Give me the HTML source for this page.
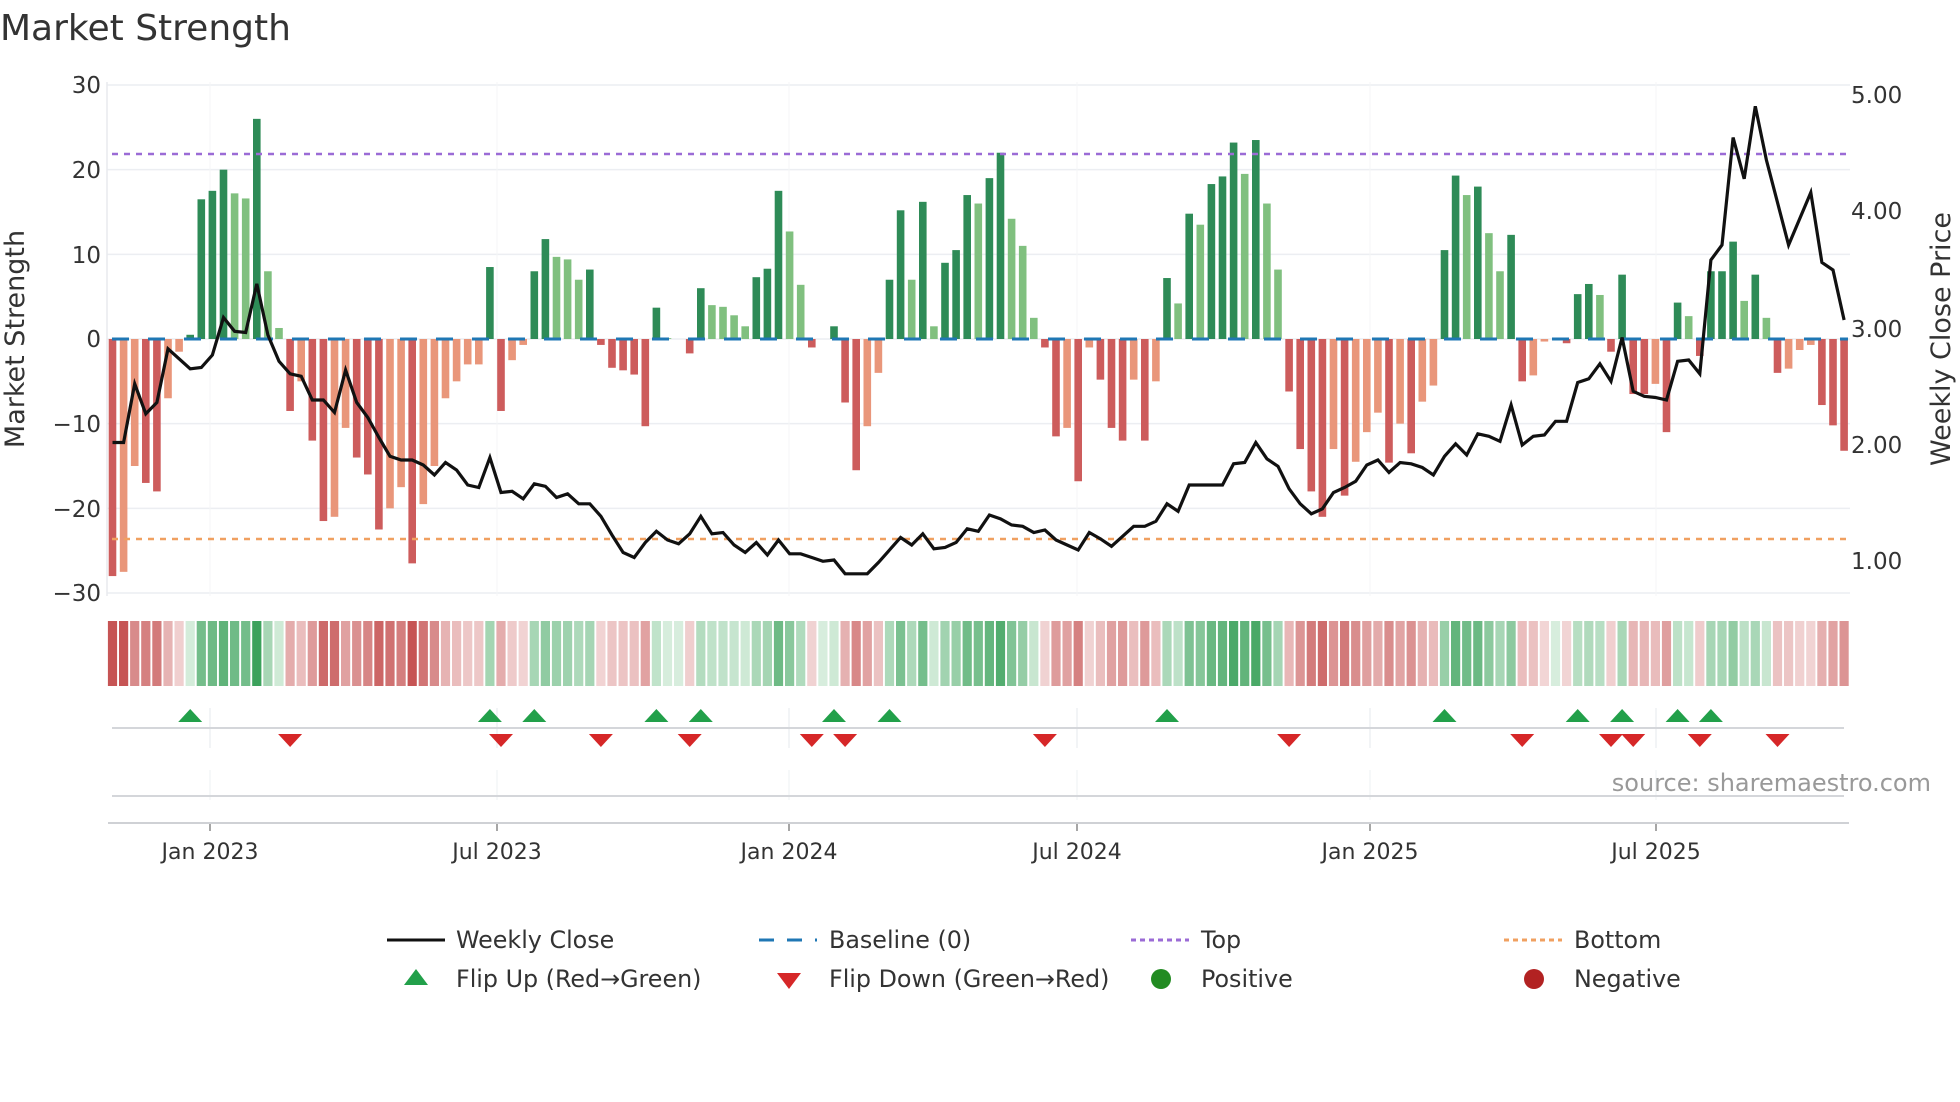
<!DOCTYPE html>
<html><head><meta charset="utf-8"><style>
html,body{margin:0;padding:0;background:#fff;}
svg{display:block;font-family:"DejaVu Sans","Liberation Sans",sans-serif;}
</style></head><body>
<svg id="c" width="1960" height="1102" viewBox="0 0 1960 1102" xmlns="http://www.w3.org/2000/svg">
<text x="0" y="40" font-size="36" fill="#333">Market Strength</text>
<g id="grid"></g>
<g font-size="23" fill="#333" text-anchor="end">
<text x="101" y="93">30</text><text x="101" y="178">20</text><text x="101" y="263">10</text>
<text x="101" y="347">0</text><text x="101" y="432">−10</text><text x="101" y="517">−20</text><text x="101" y="601">−30</text>
</g>
<g font-size="23" fill="#333">
<text x="1851" y="103">5.00</text><text x="1851" y="219">4.00</text><text x="1851" y="337">3.00</text>
<text x="1851" y="453">2.00</text><text x="1851" y="569">1.00</text>
</g>
<text transform="translate(24,339) rotate(-90)" font-size="27" fill="#333" text-anchor="middle">Market Strength</text>
<text transform="translate(1950,339) rotate(-90)" font-size="27" fill="#333" text-anchor="middle">Weekly Close Price</text>
<g id="bars"></g>
<g id="strip"></g>
<g id="marks"></g>
<g font-size="22" fill="#333" text-anchor="middle">
<text x="210" y="859">Jan 2023</text><text x="497" y="859">Jul 2023</text><text x="789" y="859">Jan 2024</text>
<text x="1077" y="859">Jul 2024</text><text x="1370" y="859">Jan 2025</text><text x="1656" y="859">Jul 2025</text>
</g>
<text x="1931" y="791" font-size="24" fill="#999" text-anchor="end">source: sharemaestro.com</text>
<g font-size="23.8" fill="#333">
<line x1="387" y1="940" x2="445" y2="940" stroke="#111" stroke-width="3"/>
<text x="456" y="948">Weekly Close</text>
<line x1="759" y1="940" x2="817" y2="940" stroke="#1f77b4" stroke-width="3" stroke-dasharray="15,13"/>
<text x="829" y="948">Baseline (0)</text>
<line x1="1131" y1="940" x2="1189" y2="940" stroke="#9b6bd6" stroke-width="3" stroke-dasharray="5,4"/>
<text x="1201" y="948">Top</text>
<line x1="1504" y1="940" x2="1562" y2="940" stroke="#f0a060" stroke-width="3" stroke-dasharray="5,4"/>
<text x="1574" y="948">Bottom</text>
<polygon points="404,985 428,985 416,969" fill="#22a04a"/>
<text x="456" y="987">Flip Up (Red→Green)</text>
<polygon points="777,973 801,973 789,989" fill="#d62728"/>
<text x="829" y="987">Flip Down (Green→Red)</text>
<circle cx="1161" cy="979" r="10" fill="#228b22"/>
<text x="1201" y="987">Positive</text>
<circle cx="1534" cy="979" r="10" fill="#b22222"/>
<text x="1574" y="987">Negative</text>
</g>
</svg>
<script>
var D=[[-28,'DR'],[-27.5,'LR'],[-15,'LR'],[-17,'DR'],[-18,'DR'],[-7,'LR'],[-1.5,'LR'],[0.5,'DG'],[16.5,'DG'],[17.5,'DG'],[20,'DG'],[17.2,'LG'],[16.6,'LG'],[26,'DG'],[8,'LG'],[1.3,'LG'],
[-8.5,'DR'],[-5,'LR'],[-12,'DR'],[-21.5,'DR'],[-21,'LR'],[-10.5,'LR'],[-14,'DR'],[-16,'DR'],[-22.5,'DR'],[-20,'LR'],[-17.5,'LR'],[-26.5,'DR'],[-19.5,'LR'],[-15,'LR'],[-7,'LR'],[-5,'LR'],[-3,'LR'],[-3,'LR'],
[8.5,'DG'],[-8.5,'DR'],[-2.5,'LR'],[-0.7,'LR'],[8,'DG'],[11.8,'DG'],[9.7,'LG'],[9.4,'LG'],[7,'LG'],[8.2,'DG'],[-0.7,'DR'],[-3.4,'DR'],[-3.7,'DR'],[-4.2,'DR'],[-10.3,'DR'],[3.7,'DG'],[0.1,'LG'],[0,'LR'],[-1.7,'DR'],
[6,'DG'],[4,'LG'],[3.8,'LG'],[2.8,'LG'],[1.5,'LG'],[7.3,'DG'],[8.3,'DG'],[17.5,'DG'],[12.7,'LG'],[6.4,'LG'],[-1,'DR'],[0,'LR'],[1.5,'DG'],[-7.5,'DR'],[-15.5,'DR'],[-10.3,'LR'],[-4,'LR'],
[7,'DG'],[15.2,'DG'],[7,'LG'],[16.2,'DG'],[1.5,'LG'],[9,'DG'],[10.5,'DG'],[17,'DG'],[16,'LG'],[19,'DG'],[22,'DG'],[14.2,'LG'],[11,'LG'],[2.5,'LG'],
[-1,'DR'],[-11.5,'DR'],[-10.5,'LR'],[-16.8,'DR'],[-1,'LR'],[-4.8,'DR'],[-10.5,'DR'],[-12,'DR'],[-4.8,'LR'],[-12,'DR'],[-5,'LR'],
[7.2,'DG'],[4.2,'LG'],[14.8,'DG'],[13.5,'LG'],[18.3,'DG'],[19.2,'DG'],[23.2,'DG'],[19.5,'LG'],[23.5,'DG'],[16,'LG'],[8.2,'LG'],
[-6.2,'DR'],[-13,'DR'],[-18,'DR'],[-21,'DR'],[-13,'LR'],[-18.5,'DR'],[-14.5,'LR'],[-11,'LR'],[-8.7,'LR'],[-14.6,'DR'],[-10,'LR'],[-13.5,'DR'],[-7.4,'LR'],[-5.5,'LR'],
[10.5,'DG'],[19.3,'DG'],[17,'LG'],[18,'DG'],[12.5,'LG'],[8,'LG'],[12.3,'DG'],
[-5,'DR'],[-4.3,'LR'],[-0.3,'LR'],[0,'LR'],[-0.5,'DR'],[5.3,'DG'],[6.5,'DG'],[5.2,'LG'],[-1.5,'DR'],[7.6,'DG'],[-6.5,'DR'],[-6.5,'DR'],[-5.3,'LR'],[-11,'DR'],
[4.3,'DG'],[2.7,'LG'],[-2,'DR'],[8,'DG'],[8,'DG'],[11.5,'DG'],[4.5,'LG'],[7.6,'DG'],[2.5,'LG'],[-4,'DR'],[-3.5,'LR'],[-1.3,'LR'],[-0.7,'LR'],[-7.8,'DR'],[-10.2,'DR'],[-13.2,'DR']];
var L=[354,354,307,331,322,279,287,295,294,284,254,265,266,227,268,289,299,301,320,320,330,296,322,334,350,365,368,368,372,380,370,376,388,390,366,394,393,399,387,389,398,395,403,403,413,428,442,446,434,425,432,435,427,413,427,426,436,442,434,444,432,443,443,446,449,448,459,459,459,450,440,430,436,427,439,438,434,423,425,412,415,420,421,426,424,432,436,440,426,431,437,429,421,421,417,403,409,388,388,388,388,371,370,354,367,373,391,403,411,407,394,390,385,372,368,378,370,371,374,380,365,355,364,347,349,353,324,356,349,348,337,337,306,303,291,305,270,313,317,318,320,289,288,299,208,196,110,143,85,128,162,196,175,154,210,216,256];
var UP=[7,34,38,49,53,65,70,95,120,132,136,141,144],DN=[16,35,44,52,63,66,84,106,127,135,137,143,150];
var NS='http://www.w3.org/2000/svg';
function el(p,t,a){var e=document.createElementNS(NS,t);for(var k in a)e.setAttribute(k,a[k]);p.appendChild(e);return e;}
var g=document.getElementById('grid'),b=document.getElementById('bars'),s=document.getElementById('strip'),m=document.getElementById('marks');
var Z=339,K=8.467;
for(var v=-30;v<=30;v+=10)el(g,'line',{x1:107,x2:1850,y1:Z-v*K,y2:Z-v*K,stroke:'#eceef2','stroke-width':1.5});
el(g,'line',{x1:107,x2:107,y1:82,y2:596,stroke:'#e8eaee','stroke-width':1.5});
var TX=[210,497,789,1077,1370,1656];
TX.forEach(function(x){el(g,'line',{x1:x,x2:x,y1:82,y2:596,stroke:'#f4f5f7','stroke-width':1});
el(m,'line',{x1:x,x2:x,y1:708,y2:748,stroke:'#e6e8ec','stroke-width':1});
el(m,'line',{x1:x,x2:x,y1:770,y2:800,stroke:'#eef0f3','stroke-width':1});
el(m,'line',{x1:x,x2:x,y1:823,y2:831,stroke:'#888','stroke-width':1.5});});
var C={DG:'#2e8b57',LG:'#80c07f',DR:'#cd5c5c',LR:'#e9967a'};
function X(i){return (90+8.88*i)*1.25;}
function mix(a,c,t){return 'rgb('+[0,1,2].map(function(j){return Math.round(a[j]+(c[j]-a[j])*t)}).join(',')+')';}
D.forEach(function(d,i){var x=X(i),v=d[0],h=Math.abs(v)*K;
if(h>0.3)el(b,'rect',{x:x-3.8,y:v>0?Z-h:Z,width:7.6,height:h,fill:C[d[1]]});
var t=Math.min(1,0.08+Math.abs(v)/28);
var col=v>=0?mix([228,244,232],[60,162,92],t):mix([246,226,226],[198,84,84],t);
el(s,'rect',{x:x-4.6,y:621,width:9.2,height:65,fill:col});});
el(b,'line',{x1:112,x2:1848,y1:Z,y2:Z,stroke:'#1f77b4','stroke-width':3,'stroke-dasharray':'17,19'});
el(b,'line',{x1:112,x2:1848,y1:154,y2:154,stroke:'#9b6bd6','stroke-width':2.5,'stroke-dasharray':'6,6'});
el(b,'line',{x1:112,x2:1848,y1:539,y2:539,stroke:'#f0a060','stroke-width':2.5,'stroke-dasharray':'6,6'});
el(b,'polyline',{points:L.map(function(y,i){return X(i).toFixed(1)+','+(y*1.25).toFixed(1)}).join(' '),fill:'none',stroke:'#111','stroke-width':3.2,'stroke-linejoin':'miter'});
el(m,'line',{x1:112,x2:1844,y1:728,y2:728,stroke:'#d4d6da','stroke-width':2});
el(m,'line',{x1:112,x2:1844,y1:796,y2:796,stroke:'#d4d6da','stroke-width':2});
el(m,'line',{x1:108,x2:1849,y1:823,y2:823,stroke:'#cfd1d5','stroke-width':2});
UP.forEach(function(i){var x=X(i);el(m,'polygon',{points:(x-12)+',722 '+(x+12)+',722 '+x+',709',fill:'#22a04a'});});
DN.forEach(function(i){var x=X(i);el(m,'polygon',{points:(x-12)+',734 '+(x+12)+',734 '+x+',747',fill:'#d62728'});});
</script>
</body></html>
